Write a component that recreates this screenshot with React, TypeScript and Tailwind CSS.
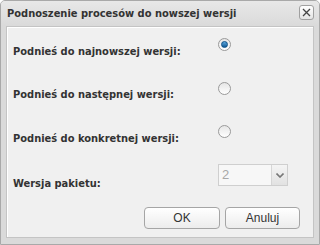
import React from "react";

function Radio({ checked }: { checked?: boolean }) {
  return (
    <div className="w-[13px] h-[13px] rounded-full border border-[#9a9a9a] bg-gradient-to-b from-[#e6e6e6] to-[#ffffff] flex items-center justify-center">
      {checked && (
        <div className="w-[7px] h-[7px] rounded-full bg-gradient-to-b from-[#5aa7dc] to-[#0e5a96] border border-[#0b4f86]" />
      )}
    </div>
  );
}

const cond = { fontFamily: '"DejaVu Sans Condensed", "DejaVu Sans", sans-serif', fontStretch: "condensed" as const };

export default function App() {
  return (
    <div
      className="w-[320px] h-[245px] bg-[#dadada] border border-[#a9a9a9] rounded-t-[5px] flex flex-col overflow-hidden"
      style={cond}
    >
      <div className="h-[25px] flex items-start justify-between pl-[6px] pr-[5px] bg-gradient-to-b from-[#e8e8e8] to-[#dadada]">
        <div className="pt-[5px] text-[11px] leading-[15px] font-bold text-[#333333]">
          Podnoszenie procesów do nowszej wersji
        </div>
        <div className="mt-[4px] w-[15px] h-[15px] border border-[#a0a0a0] rounded-[3px] bg-gradient-to-b from-[#ffffff] to-[#e4e4e4] flex items-center justify-center">
          <svg width="9" height="9" viewBox="0 0 9 9">
            <path d="M1 1 L8 8 M8 1 L1 8" stroke="#444" strokeWidth="1.3" />
          </svg>
        </div>
      </div>
      <div className="mx-[5px] mb-[6px] flex-1 border border-[#c4c4c4] bg-[#f0f0f0] shadow-[inset_1px_1px_0_#ffffff]">
        <div className="pl-[6px] flex flex-col">
          <div className="flex h-[44px]">
            <div className="w-[205px] pt-[18px] text-[11px] leading-[13px] font-bold text-[#333333]">Podnieś do najnowszej wersji:</div>
            <div className="pt-[11px]"><Radio checked /></div>
          </div>
          <div className="flex h-[43px]">
            <div className="w-[205px] pt-[17px] text-[11px] leading-[13px] font-bold text-[#333333]">Podnieś do następnej wersji:</div>
            <div className="pt-[11px]"><Radio /></div>
          </div>
          <div className="flex h-[44px]">
            <div className="w-[205px] pt-[18px] text-[11px] leading-[13px] font-bold text-[#333333]">Podnieś do konkretnej wersji:</div>
            <div className="pt-[11px]"><Radio /></div>
          </div>
          <div className="flex h-[49px]">
            <div className="w-[205px] pt-[19px] text-[11px] leading-[13px] font-bold text-[#333333]">Wersja pakietu:</div>
            <div className="pt-[6px]">
              <div className="w-[70px] h-[22px] border border-[#cfcfcf] bg-[#f7f7f7] flex">
                <div className="flex-1 text-[13px] leading-[20px] pl-[3px] text-[#a8a8a8]" style={{ fontFamily: '"Liberation Sans", Arial, sans-serif' }}>2</div>
                <div className="w-[16px] border-l border-[#d6d6d6] bg-gradient-to-b from-[#f4f4f4] to-[#e2e2e2] flex items-center justify-center">
                  <svg width="8" height="5" viewBox="0 0 8 5">
                    <path d="M0.5 0.5 L4 4 L7.5 0.5" stroke="#777" strokeWidth="1.6" fill="none" />
                  </svg>
                </div>
              </div>
            </div>
          </div>
          <div className="flex justify-end gap-[5px] pr-[13px]">
            <button className="w-[76px] h-[22px] border border-[#a5a5a5] rounded-[4px] bg-gradient-to-b from-[#ffffff] to-[#ececec] text-[12px] text-[#333333]" style={{ fontFamily: '"Liberation Sans", Arial, sans-serif' }}>OK</button>
            <button className="w-[75px] h-[22px] border border-[#a5a5a5] rounded-[4px] bg-gradient-to-b from-[#ffffff] to-[#ececec] text-[12px] text-[#333333]" style={{ fontFamily: '"Liberation Sans", Arial, sans-serif' }}>Anuluj</button>
          </div>
        </div>
      </div>
    </div>
  );
}
